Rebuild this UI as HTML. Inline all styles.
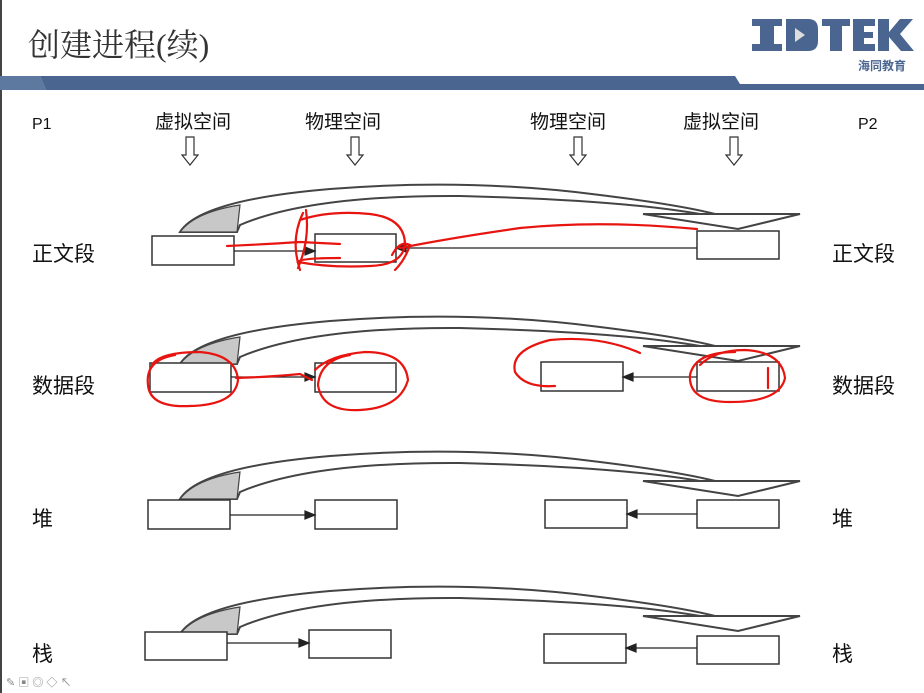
<!DOCTYPE html>
<html><head><meta charset="utf-8"><style>
body{margin:0;width:924px;height:693px;overflow:hidden;background:#fff;font-family:"Liberation Sans","Noto Sans CJK SC",sans-serif;}
</style></head><body>
<svg width="924" height="693" viewBox="0 0 924 693" xmlns="http://www.w3.org/2000/svg" style="position:absolute;left:0;top:0">
<defs>
<g id="arc">
<path d="M180,232 Q200,200 330,189 Q470,178 600,195 Q680,205 715,214 L700,214 Q620,200 460,196 Q310,195 240,225 L237,232 Z" fill="#fff" stroke="#444" stroke-width="2"/>
<path d="M180,232 Q195,212 240,205 L237,232 Z" fill="#c8c8c8" stroke="#444" stroke-width="1.2"/>
<polygon points="643,214 800,214 738,229" fill="#fff" stroke="#444" stroke-width="2"/>
</g>
<g id="darr"><path d="M-4,0 V18 H-8 L0,28 L8,18 H4 V0 Z" fill="#fff" stroke="#333" stroke-width="1.2"/></g>
</defs>
<rect x="0" y="0" width="2" height="693" fill="#444"/>
<text x="28" y="56" font-size="32" fill="#333" font-family="'Liberation Serif','Noto Serif CJK SC',serif">创建进程(续)</text>
<!-- logo -->
<g fill="#4a6690">
<rect x="752" y="19" width="30" height="7"/><rect x="760" y="19" width="14" height="32"/><rect x="752" y="44" width="30" height="7"/>
<path d="M786,19 H808 Q818,19 818,29 V41 Q818,51 808,51 H786 Z"/>
<rect x="822" y="19" width="28" height="7"/><rect x="830" y="19" width="12" height="32"/>
<path d="M853,19 H875 V26 H864 V32 H873 V38 H864 V44 H875 V51 H853 Z"/>
<path d="M878,19 H889 V32 L900,19 H913 L900,34 L914,51 H901 L889,37 V51 H878 Z"/>
</g>
<path d="M795,28 L805,35 L795,42 Z" fill="#ddd"/>
<text x="858" y="70" font-size="12" fill="#4a6690" font-weight="bold">海同教育</text>
<!-- band -->
<path d="M0,76 L40,76 L46,90 L924,90 L924,84 L740,84 L735,76 Z" fill="#4a6690"/>
<path d="M0,76 L40,76 L46,90 L0,90 Z" fill="#5d79a0"/>
<g font-size="19" fill="#111">
<text x="32" y="129" font-size="16">P1</text><text x="858" y="129" font-size="16">P2</text>
<text x="155" y="128">虚拟空间</text><text x="305" y="128">物理空间</text>
<text x="530" y="128">物理空间</text><text x="683" y="128">虚拟空间</text>
<text x="32" y="261" font-size="21">正文段</text><text x="832" y="261" font-size="21">正文段</text>
<text x="32" y="393" font-size="21">数据段</text><text x="832" y="393" font-size="21">数据段</text>
<text x="32" y="526" font-size="21">堆</text><text x="832" y="526" font-size="21">堆</text>
<text x="32" y="661" font-size="21">栈</text><text x="832" y="661" font-size="21">栈</text>
</g>
<use href="#darr" x="190" y="137"/><use href="#darr" x="355" y="137"/><use href="#darr" x="578" y="137"/><use href="#darr" x="734" y="137"/>
<use href="#arc"/>
<use href="#arc" y="132"/>
<use href="#arc" y="267"/>
<use href="#arc" y="402"/>
<g fill="#fff" stroke="#333" stroke-width="1.5">
<rect x="152" y="236" width="82" height="29"/><rect x="315" y="234" width="81" height="28"/><rect x="697" y="231" width="82" height="28"/>
<rect x="150" y="363" width="81" height="29"/><rect x="315" y="363" width="81" height="29"/><rect x="541" y="362" width="82" height="29"/><rect x="697" y="362" width="82" height="29"/>
<rect x="148" y="500" width="82" height="29"/><rect x="315" y="500" width="82" height="29"/><rect x="545" y="500" width="82" height="28"/><rect x="697" y="500" width="82" height="28"/>
<rect x="145" y="632" width="82" height="28"/><rect x="309" y="630" width="82" height="28"/><rect x="544" y="634" width="82" height="29"/><rect x="697" y="636" width="82" height="28"/>
</g>
<g stroke="#222" stroke-width="1.2" fill="#222">
<line x1="234" y1="251" x2="308" y2="251"/><polygon points="315,251 305,247 305,255"/>
<line x1="396" y1="248" x2="697" y2="248"/><polygon points="396,248 406,244 406,252"/>
<line x1="231" y1="377" x2="308" y2="377"/><polygon points="315,377 305,373 305,381"/>
<line x1="630" y1="377" x2="697" y2="377"/><polygon points="623,377 633,373 633,381"/>
<line x1="230" y1="515" x2="308" y2="515"/><polygon points="315,515 305,511 305,519"/>
<line x1="634" y1="514" x2="697" y2="514"/><polygon points="627,514 637,510 637,518"/>
<line x1="227" y1="643" x2="302" y2="643"/><polygon points="309,643 299,639 299,647"/>
<line x1="633" y1="648" x2="697" y2="648"/><polygon points="626,648 636,644 636,652"/>
</g>
<!-- red annotations -->
<g fill="none" stroke="#e8140f" stroke-width="2.2" stroke-linecap="round">
<path d="M227,246 Q270,244 300,242 L340,244"/>
<path d="M303,213 Q290,240 300,270 M306,210 Q310,240 298,268"/>
<path d="M300,220 Q330,210 370,214 Q405,218 405,245 Q402,265 370,266 Q330,268 298,262 Q300,258 340,258"/>
<path d="M392,255 Q400,240 410,245 Q405,260 395,270 M400,248 Q450,238 520,228 Q600,220 697,229"/>
<path d="M175,355 Q145,360 148,385 Q150,408 190,406 Q235,405 238,380 Q236,355 200,352 Q160,352 152,365"/>
<path d="M236,378 Q270,377 300,374 L312,380"/>
<path d="M350,355 Q320,360 318,385 Q322,412 360,410 Q400,408 408,380 Q405,352 365,352 Q330,355 315,370"/>
<path d="M640,353 Q600,335 550,340 Q510,350 515,372 Q525,388 555,386"/>
<path d="M735,352 Q695,352 690,375 Q688,402 730,402 Q780,402 785,378 Q782,352 745,350 Q715,350 700,365"/>
<path d="M768,368 L768,388"/>
</g>
<g fill="#888" font-size="11"><text x="6" y="686">✎ ▣ ◎ ◇ ↖</text></g>
</svg>
</body></html>
